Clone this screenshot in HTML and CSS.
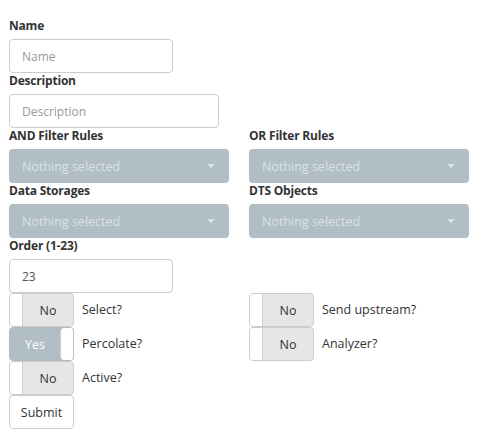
FILE: index.html
```html
<!DOCTYPE html>
<html>
<head>
<meta charset="utf-8">
<link rel="stylesheet" href="styles.css">
</head>
<body>
<form class="form">
  <label class="lbl">Name</label>
  <input class="inp inp-name" placeholder="Name">
  <label class="lbl">Description</label>
  <input class="inp inp-desc" placeholder="Description">
  <div class="grid">
    <div class="col">
      <label class="lbl">AND Filter Rules</label>
      <div class="sel"><span>Nothing selected</span><i class="caret"></i></div>
    </div>
    <div class="col">
      <label class="lbl">OR Filter Rules</label>
      <div class="sel"><span>Nothing selected</span><i class="caret"></i></div>
    </div>
    <div class="col">
      <label class="lbl">Data Storages</label>
      <div class="sel"><span>Nothing selected</span><i class="caret"></i></div>
    </div>
    <div class="col">
      <label class="lbl">DTS Objects</label>
      <div class="sel"><span>Nothing selected</span><i class="caret"></i></div>
    </div>
  </div>
  <label class="lbl">Order (1-23)</label>
  <input class="inp inp-name" value="23">
  <div class="toggles">
    <div class="tcol">
      <div class="trow"><div class="tog off"><span class="knob"></span><span class="ttxt">No</span></div><span class="tlbl">Select?</span></div>
      <div class="trow"><div class="tog on"><span class="ttxt">Yes</span><span class="knob"></span></div><span class="tlbl">Percolate?</span></div>
      <div class="trow"><div class="tog off"><span class="knob"></span><span class="ttxt">No</span></div><span class="tlbl">Active?</span></div>
      <button type="button" class="btn">Submit</button>
    </div>
    <div class="tcol">
      <div class="trow"><div class="tog off"><span class="knob"></span><span class="ttxt">No</span></div><span class="tlbl">Send upstream?</span></div>
      <div class="trow"><div class="tog off"><span class="knob"></span><span class="ttxt">No</span></div><span class="tlbl">Analyzer?</span></div>
    </div>
  </div>
</form>
</body>
</html>
```

FILE: styles.css
```css
html, body {
  margin: 0;
  padding: 0;
  background: #fff;
}
body {
  font-family: "Open Sans", "DejaVu Sans", sans-serif;
  font-size: 12px;
  color: #333;
}
.form {
  padding: 18px 9px 0 9px;
  display: flex;
  flex-direction: column;
  align-items: flex-start;
}
.lbl {
  display: block;
  font-weight: 700;
  font-size: 12px;
  line-height: 15px;
  height: 15px;
  margin-bottom: 6px;
  color: #333;
  letter-spacing: -0.2px;
}
.inp {
  box-sizing: border-box;
  height: 34px;
  border: 1px solid #ccc;
  border-radius: 4px;
  padding: 0 12px;
  font-family: inherit;
  font-size: 12px;
  color: #555;
  outline: none;
  margin: 0;
}
.inp::placeholder {
  color: #999;
}
.inp-name { width: 164px; }
.inp-desc { width: 210px; }
.grid {
  display: grid;
  grid-template-columns: 220px 220px;
  column-gap: 20px;
}
.sel {
  box-sizing: border-box;
  height: 34px;
  width: 220px;
  background: #b1bec6;
  border-radius: 4px;
  display: flex;
  align-items: center;
  justify-content: space-between;
  padding: 0 12px 0 13px;
  color: #dbe2e6;
  font-size: 12.5px;
}
.caret {
  width: 0;
  height: 0;
  border-left: 4px solid transparent;
  border-right: 4px solid transparent;
  border-top: 4px solid #dbe2e6;
  margin-right: 2px;
}
.toggles {
  display: grid;
  grid-template-columns: 240px 240px;
}
.tcol {
  display: flex;
  flex-direction: column;
  align-items: flex-start;
}
.trow {
  display: flex;
  align-items: center;
  height: 34px;
}
.tog {
  box-sizing: border-box;
  width: 65px;
  height: 34px;
  border: 1px solid #ccc;
  border-radius: 4px;
  display: flex;
  overflow: hidden;
  font-size: 12.5px;
}
.tog.off { background: #e6e6e6; color: #333; }
.tog.on { background: #b1bec6; color: #fff; border-color: #b1bec6; }
.knob {
  width: 12px;
  background: #fff;
  flex: none;
}
.tog.off .knob { border-right: 1px solid #ccc; }
.tog.on .knob { border-left: 1px solid #ccc; border-radius: 4px 0 0 4px; }
.ttxt {
  flex: 1;
  display: flex;
  align-items: center;
  justify-content: center;
}
.tlbl {
  margin-left: 8px;
  font-size: 12.5px;
  color: #333;
  margin-top: -2px;
}
.btn {
  box-sizing: border-box;
  height: 34px;
  width: 65px;
  background: #fff;
  border: 1px solid #ccc;
  border-radius: 4px;
  font-family: inherit;
  font-size: 12.5px;
  color: #333;
  padding: 0;
}
```
